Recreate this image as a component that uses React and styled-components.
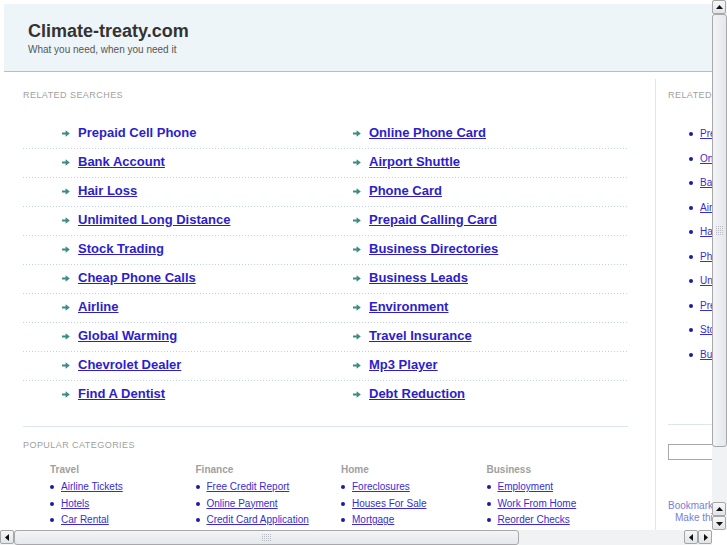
import styled, { createGlobalStyle } from "styled-components"

const GlobalStyle = createGlobalStyle`
    html, body {
        margin: 0;
        padding: 0;
        overflow: hidden;
        background: #ffffff;
        font-family: "Liberation Sans", Arial, sans-serif;
    }
`

const relacionados = [
    ["Prepaid Cell Phone", "Online Phone Card"],
    ["Bank Account", "Airport Shuttle"],
    ["Hair Loss", "Phone Card"],
    ["Unlimited Long Distance", "Prepaid Calling Card"],
    ["Stock Trading", "Business Directories"],
    ["Cheap Phone Calls", "Business Leads"],
    ["Airline", "Environment"],
    ["Global Warming", "Travel Insurance"],
    ["Chevrolet Dealer", "Mp3 Player"],
    ["Find A Dentist", "Debt Reduction"],
]

const lateral = [
    "Prepaid Cell Phone", "Online Phone Card", "Bank Account", "Airport Shuttle", "Hair Loss",
    "Phone Card", "Unlimited Long Distance", "Prepaid Calling Card", "Stock Trading", "Business Directories",
]

const categorias = [
    { nome: "Travel", itens: ["Airline Tickets", "Hotels", "Car Rental"] },
    { nome: "Finance", itens: ["Free Credit Report", "Online Payment", "Credit Card Application"] },
    { nome: "Home", itens: ["Foreclosures", "Houses For Sale", "Mortgage"] },
    { nome: "Business", itens: ["Employment", "Work From Home", "Reorder Checks"] },
]

function Seta() {
    return (
        <svg width="8" height="7" viewBox="0 0 8 7">
            <path d="M0 2.6h3.6V0.2L7.8 3.5 3.6 6.8V4.4H0z" fill="#3b8c84" />
        </svg>
    )
}

function Triangulo({ dir }) {
    const paths = {
        up: "M1 6L4.5 2 8 6z",
        down: "M1 3L4.5 7 8 3z",
        left: "M6 1L2 4.5 6 8z",
        right: "M3 1L7 4.5 3 8z",
    }
    return (
        <svg width="9" height="9" viewBox="0 0 9 9">
            <path d={paths[dir]} fill="#111" />
        </svg>
    )
}

function Grip({ vertical }) {
    const dots = []
    const cols = vertical ? 4 : 5
    const rows = vertical ? 5 : 4
    for (let r = 0; r < rows; r++)
        for (let c = 0; c < cols; c++)
            dots.push(<rect key={r + "-" + c} x={c * 2} y={r * 2} width="1" height="1" fill="#b8bcc2" />)
    return (
        <svg width={cols * 2} height={rows * 2}>
            {dots}
        </svg>
    )
}

export default function App() {
    return (
        <Janela>
            <GlobalStyle />
            <LinhaSuperior>
                <Viewport>
                    <Pagina>
                        <Header>
                            <Titulo>Climate-treaty.com</Titulo>
                            <Subtitulo>What you need, when you need it</Subtitulo>
                        </Header>
                        <Conteudo>
                            <Principal>
                                <Rotulo>Related Searches</Rotulo>
                                <ListaLinks>
                                    {relacionados.map((par, i) => (
                                        <LinhaLink key={i} ultima={i === relacionados.length - 1}>
                                            {par.map((txt, j) => (
                                                <Celula key={j}>
                                                    <Seta />
                                                    <LinkForte sublinhado={!(i === 0 && j === 0)}>{txt}</LinkForte>
                                                </Celula>
                                            ))}
                                        </LinhaLink>
                                    ))}
                                </ListaLinks>
                                <Separador />
                                <Rotulo>Popular Categories</Rotulo>
                                <GradeCategorias>
                                    {categorias.map(cat => (
                                        <Categoria key={cat.nome}>
                                            <CategoriaNome>{cat.nome}</CategoriaNome>
                                            {cat.itens.map(it => (
                                                <CategoriaItem key={it}>
                                                    <Bolinha />
                                                    <LinkFino>{it}</LinkFino>
                                                </CategoriaItem>
                                            ))}
                                        </Categoria>
                                    ))}
                                </GradeCategorias>
                            </Principal>
                            <Lateral>
                                <Rotulo>Related Searches</Rotulo>
                                <ListaLateral>
                                    {lateral.map(txt => (
                                        <ItemLateral key={txt}>
                                            <Bolinha />
                                            <LinkFino>{txt}</LinkFino>
                                        </ItemLateral>
                                    ))}
                                </ListaLateral>
                                <LinhaLateral />
                                <Busca type="text" />
                                <Favorito>Bookmark this page</Favorito>
                                <Favorito recuo>Make this your homepage</Favorito>
                            </Lateral>
                        </Conteudo>
                    </Pagina>
                </Viewport>
                <BarraVertical>
                    <Botao><Triangulo dir="up" /></Botao>
                    <PolegarV><Grip vertical /></PolegarV>
                    <Trilho />
                    <Botao><Triangulo dir="up" /></Botao>
                    <Botao><Triangulo dir="down" /></Botao>
                </BarraVertical>
            </LinhaSuperior>
            <BarraHorizontal>
                <Botao><Triangulo dir="left" /></Botao>
                <PolegarH><Grip /></PolegarH>
                <Trilho />
                <Botao><Triangulo dir="left" /></Botao>
                <Botao><Triangulo dir="right" /></Botao>
                <Canto />
            </BarraHorizontal>
        </Janela>
    )
}

const Janela = styled.div`
    width: 727px;
    height: 545px;
    display: flex;
    flex-direction: column;
    overflow: hidden;
`

const LinhaSuperior = styled.div`
    display: flex;
    height: 530px;
`

const Viewport = styled.div`
    flex: 1;
    overflow: hidden;
`

const Pagina = styled.div`
    width: 1000px;
    padding: 4px 0 0 4px;
`

const Header = styled.div`
    height: 68px;
    background-color: #eef5f8;
    border-bottom: 1px solid #a9bfe6;
    padding: 16px 0 0 24px;
    box-sizing: border-box;
`

const Titulo = styled.div`
    font-size: 18px;
    line-height: 22px;
    font-weight: bold;
    color: #333333;
`

const Subtitulo = styled.div`
    font-size: 10px;
    line-height: 14px;
    color: #555555;
    margin-top: 1px;
`

const Conteudo = styled.div`
    display: flex;
    align-items: flex-start;
`

const Principal = styled.div`
    width: 605px;
    margin-left: 19px;
    padding-top: 17px;
`

const Rotulo = styled.div`
    font-size: 9px;
    line-height: 12px;
    text-transform: uppercase;
    letter-spacing: 0.45px;
    color: #a0a0a0;
`

const ListaLinks = styled.div`
    margin-top: 19px;
`

const LinhaLink = styled.div`
    display: flex;
    padding-top: 5px;
    box-sizing: border-box;
    height: ${props => props.ultima ? "28px" : "29px"};
    background-image: ${props => props.ultima ? "none" : "linear-gradient(90deg, #bcd0ea 1px, transparent 1px)"};
    background-size: 3px 1px;
    background-repeat: repeat-x;
    background-position: left bottom;
`

const Celula = styled.div`
    width: 291px;
    padding-left: 39px;
    box-sizing: border-box;
    display: flex;
    align-items: center;
    gap: 8px;
    height: 16px;
`

const LinkForte = styled.a`
    font-size: 13px;
    line-height: 16px;
    font-weight: bold;
    color: #2d1dcc;
    text-decoration: ${props => props.sublinhado ? "underline" : "none"};
    white-space: nowrap;
    cursor: pointer;
`

const Separador = styled.div`
    height: 1px;
    background-color: #dce6f0;
    margin: 17px 0 12px;
`

const GradeCategorias = styled.div`
    display: grid;
    grid-template-columns: repeat(4, 145.5px);
    padding-left: 27px;
    margin-top: 13px;
`

const Categoria = styled.div`
    display: flex;
    flex-direction: column;
`

const CategoriaNome = styled.div`
    font-size: 10px;
    line-height: 12px;
    font-weight: bold;
    color: #a0a0a0;
    margin-bottom: 3px;
`

const CategoriaItem = styled.div`
    display: flex;
    align-items: center;
    gap: 7px;
    height: 16.5px;
`

const Bolinha = styled.span`
    width: 4px;
    height: 4px;
    border-radius: 50%;
    background-color: #1d1aa8;
    flex-shrink: 0;
`

const LinkFino = styled.a`
    font-size: 10px;
    line-height: 14px;
    color: #3a2bd6;
    text-decoration: underline;
    white-space: nowrap;
    cursor: pointer;
`

const Lateral = styled.div`
    margin-left: 27px;
    margin-top: 7px;
    border-left: 1px solid #dce6f0;
    padding: 10px 0 40px 12px;
    width: 170px;
`

const ListaLateral = styled.div`
    margin-top: 21px;
    padding-left: 21px;
`

const ItemLateral = styled.div`
    display: flex;
    align-items: center;
    gap: 7px;
    height: 24.5px;
`

const LinhaLateral = styled.div`
    height: 1px;
    background-color: #dce6f0;
    margin-top: 57px;
`

const Busca = styled.input`
    display: block;
    margin-top: 19px;
    width: 150px;
    height: 16px;
    box-sizing: border-box;
    border: 1px solid #a8a8a8;
    padding: 0;
`

const Favorito = styled.div`
    font-size: 10px;
    line-height: 12px;
    color: #7a7dd6;
    white-space: nowrap;
    margin-left: ${props => props.recuo ? "7px" : "0"};
    margin-top: ${props => props.recuo ? "0" : "40px"};
`

const BarraVertical = styled.div`
    width: 15px;
    display: flex;
    flex-direction: column;
    background: #f3f4f5;
`

const BarraHorizontal = styled.div`
    height: 15px;
    display: flex;
    background: #f3f4f5;
`

const Botao = styled.div`
    width: 14px;
    height: 14px;
    flex-shrink: 0;
    border: 1px solid #a6a6a6;
    border-radius: 2px;
    background: linear-gradient(#f7f7f7, #e2e4e7);
    display: flex;
    align-items: center;
    justify-content: center;
    box-sizing: border-box;
`

const PolegarV = styled.div`
    height: 433px;
    flex-shrink: 0;
    border: 1px solid #a8a8a8;
    border-radius: 3px;
    background: linear-gradient(90deg, #f2f4f7, #e4e7ec);
    display: flex;
    align-items: center;
    justify-content: center;
    box-sizing: border-box;
`

const PolegarH = styled.div`
    width: 505px;
    flex-shrink: 0;
    border: 1px solid #a8a8a8;
    border-radius: 3px;
    background: linear-gradient(#f2f4f7, #e4e7ec);
    display: flex;
    align-items: center;
    justify-content: center;
    box-sizing: border-box;
`

const Trilho = styled.div`
    flex: 1;
    background-color: #f1f2f3;
    background-image: radial-gradient(#e0e2e4 0.6px, transparent 0.7px);
    background-size: 2px 2px;
`

const Canto = styled.div`
    width: 15px;
    flex-shrink: 0;
    background: #ffffff;
`
